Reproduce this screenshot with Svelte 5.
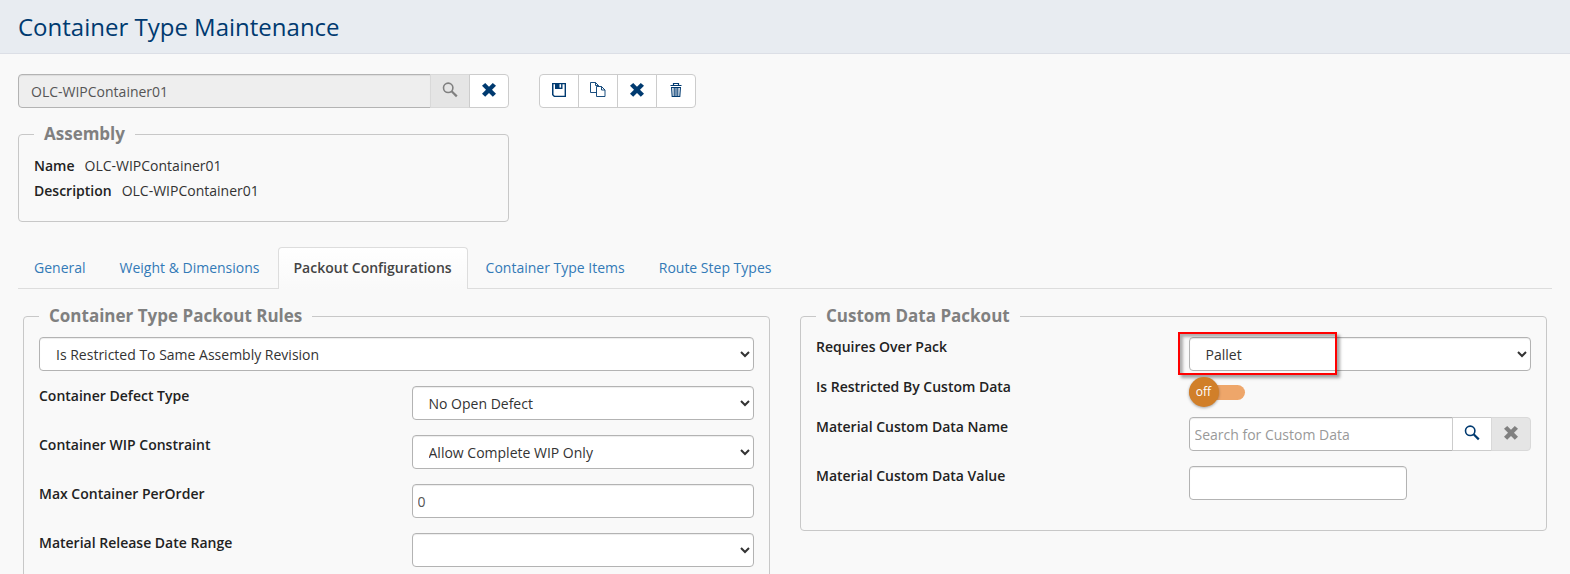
<script>
  let containerType = $state('OLC-WIPContainer01');
  let customDataName = $state('');
  let customDataValue = $state('');
  let maxPerOrder = $state('0');
  let restrictedByCustomData = $state(false);
  let activeTab = $state('Packout Configurations');

  const tabs = [
    'General',
    'Weight & Dimensions',
    'Packout Configurations',
    'Container Type Items',
    'Route Step Types'
  ];
</script>

{#snippet cross()}
  <svg class="icon" viewBox="0 0 16 16" aria-hidden="true">
    <path d="M4.200 1 8 4.800 11.800 1 15 3.800 11 7.800l4 4-3.200 2.900L8 10.900l-3.800 3.800L1 11.800l4-4-4-4z" fill="currentColor" />
  </svg>
{/snippet}

{#snippet magnifier()}
  <svg class="icon" viewBox="0 0 16 16" aria-hidden="true">
    <circle cx="6.200" cy="5.800" r="4.700" fill="none" stroke="currentColor" stroke-width="1.600" />
    <path d="m9.600 9.200 5.200 5.200" stroke="currentColor" stroke-width="2.200" fill="none" />
  </svg>
{/snippet}

<header>
  <h1>Container Type Maintenance</h1>
</header>

<main>
  <div class="toolbar">
    <div class="group lookup">
      <input aria-label="Container type" bind:value={containerType} disabled />
      <button type="button" aria-label="Search" disabled>{@render magnifier()}</button>
      <button type="button" aria-label="Clear">{@render cross()}</button>
    </div>
    <div class="group">
      <button type="button" aria-label="Save">
        <svg class="icon" viewBox="0 0 16 16" aria-hidden="true">
          <path d="M1 1h14v14H3L1 13zM2.500 2.200v10.200l1.200 1.300h9.900V2.200z" fill="currentColor" fill-rule="evenodd" />
          <path d="M4 1.500h7.500V7H4z" fill="currentColor" />
          <path d="M8.500 2.200h1.600v3.400H8.500z" fill="#fff" />
        </svg>
      </button>
      <button type="button" aria-label="Copy">
        <svg class="icon" viewBox="0 0 16 16" fill="none" stroke="currentColor" stroke-width="0.900" aria-hidden="true">
          <path d="M6.500 10.500h-6v-10h5l3 3v1M5.500.500v3h3" />
          <path d="M6.500 4.500h5l3.500 3.500v6.500H6.500zM11.500 4.500V8H15" />
        </svg>
      </button>
      <button type="button" aria-label="Cancel">{@render cross()}</button>
      <button type="button" aria-label="Delete">
        <svg class="icon" viewBox="0 0 16 16" fill="none" stroke="currentColor" aria-hidden="true">
          <path d="M5.500 3V1.500h5V3M2.500 3.500h11" stroke-width="1.200" />
          <path d="M3 5.500h10M3.600 6l.6 8.500h7.600l.6-8.500M6.200 6v8M8 6v8M9.800 6v8" stroke-width="1.100" />
        </svg>
      </button>
    </div>
  </div>

  <fieldset class="assembly">
    <legend>Assembly</legend>
    <dl>
      <div><dt>Name</dt><dd>OLC-WIPContainer01</dd></div>
      <div><dt>Description</dt><dd>OLC-WIPContainer01</dd></div>
    </dl>
  </fieldset>

  <nav>
    {#each tabs as tab}
      <a
        href="#tab"
        class:active={tab === activeTab}
        onclick={(e) => {
          e.preventDefault();
          activeTab = tab;
        }}>{tab}</a>
    {/each}
  </nav>

  <div class="panels">
    <fieldset>
      <legend>Container Type Packout Rules</legend>
      <div class="rows">
        <select aria-label="Restriction">
          <option>Is Restricted To Same Assembly Revision</option>
        </select>
        <div class="row">
          <label for="defect">Container Defect Type</label>
          <select id="defect"><option>No Open Defect</option></select>
        </div>
        <div class="row">
          <label for="wip">Container WIP Constraint</label>
          <select id="wip"><option>Allow Complete WIP Only</option></select>
        </div>
        <div class="row">
          <label for="max">Max Container PerOrder</label>
          <input id="max" bind:value={maxPerOrder} />
        </div>
        <div class="row">
          <label for="range">Material Release Date Range</label>
          <select id="range"><option></option></select>
        </div>
      </div>
    </fieldset>

    <fieldset>
      <legend>Custom Data Packout</legend>
      <div class="row tight">
        <label for="overpack">Requires Over Pack</label>
        <div class="marked">
          <select id="overpack"><option>Pallet</option></select>
          <span class="marker"></span>
        </div>
      </div>
      <div class="row tight">
        <label for="restricted">Is Restricted By Custom Data</label>
        <div class="switch">
          <input type="checkbox" id="restricted" bind:checked={restrictedByCustomData} />
          <span class="track"></span>
          <span class="knob" class:on={restrictedByCustomData}>{restrictedByCustomData ? 'on' : 'off'}</span>
        </div>
      </div>
      <div class="rows">
        <div class="row">
          <label for="dataname">Material Custom Data Name</label>
          <div class="group">
            <input id="dataname" placeholder="Search for Custom Data" bind:value={customDataName} />
            <button type="button" aria-label="Search custom data">{@render magnifier()}</button>
            <button type="button" aria-label="Clear custom data" disabled>{@render cross()}</button>
          </div>
        </div>
        <div class="row">
          <label for="datavalue">Material Custom Data Value</label>
          <input id="datavalue" class="short" bind:value={customDataValue} />
        </div>
      </div>
    </fieldset>
  </div>
</main>

<style>
  :global(body) {
    background: #f9f9f9;
    color: #222;
    font: 14px/20px 'Open Sans', sans-serif;
    overflow: hidden;
  }
  :global(*) {
    box-sizing: border-box;
  }
  header {
    padding: 8px 18px;
    background: #e8ecf1;
    border-bottom: 1px solid #dcdfe6;
  }
  h1 {
    margin: 0;
    color: #003a70;
    font-size: 24px;
    font-weight: 400;
    line-height: 37px;
  }
  main {
    padding: 20px 18px 0;
  }
  .toolbar {
    display: flex;
    gap: 30px;
  }
  .lookup,
  .assembly {
    width: 32%;
  }
  .group {
    display: flex;
  }
  input,
  select {
    width: 100%;
    min-width: 0;
    height: 34px;
    border: 1px solid #b3b3b3;
    border-radius: 4px;
    background-color: #fff;
    color: #555;
    font: inherit;
    box-shadow: inset 0 1px 1px rgba(0, 0, 0, 0.075);
  }
  input {
    padding: 1px 5px 0;
  }
  select {
    padding: 1px 0 0 12px;
    color: #333;
  }
  input::placeholder {
    color: #999;
  }
  .group input {
    flex: 1;
    border-radius: 4px 0 0 4px;
  }
  .lookup input {
    padding-left: 12px;
    background-color: #eee;
    color: #555;
  }
  button {
    display: flex;
    flex: none;
    justify-content: center;
    width: 40px;
    height: 34px;
    padding: 7px 0 0;
    border: 1px solid #ccc;
    background: #fff;
    color: #003a70;
  }
  button:not(:first-child) {
    margin-left: -1px;
  }
  button:first-child {
    border-radius: 4px 0 0 4px;
  }
  button:last-child {
    border-radius: 0 4px 4px 0;
  }
  button:disabled {
    background: #e5e5e5;
    border-color: #d9d9d9;
    color: #808080;
  }
  .icon {
    width: 16px;
    height: 16px;
  }
  fieldset {
    min-width: 0;
    margin: 0;
    padding: 0 15px 30px;
    border: 1px solid #c8c8c8;
    border-radius: 4px;
  }
  legend {
    padding: 0 10px;
    color: #808080;
    font-size: 17px;
    font-weight: 700;
    line-height: 24px;
  }
  .assembly {
    margin-top: 14px;
    padding-bottom: 15px;
  }
  dl {
    margin: 10px 0 0;
  }
  dl div {
    display: flex;
    gap: 10px;
    padding-bottom: 5px;
  }
  dt,
  label {
    font-weight: 600;
  }
  dd {
    margin: 0;
    color: #333;
  }
  nav {
    display: flex;
    gap: 2px;
    margin-top: 25px;
    border-bottom: 1px solid #ddd;
  }
  nav a {
    margin-bottom: -1px;
    padding: 10px 15px 11px;
    border: 1px solid transparent;
    border-bottom: 0;
    border-radius: 4px 4px 0 0;
    color: #337ab7;
    text-decoration: none;
  }
  nav a.active {
    border-color: #ddd;
    background: linear-gradient(#fff, #f9f9f9);
    color: #444;
    font-weight: 600;
  }
  .panels {
    display: grid;
    grid-template-columns: 1fr 1fr;
    gap: 30px;
    align-items: start;
    padding: 15px 5px 0;
  }
  .panels > fieldset {
    padding-top: 9px;
  }
  .rows {
    display: grid;
    gap: 15px;
  }
  .row {
    display: grid;
    grid-template-columns: 1fr 1fr;
    gap: 30px;
    align-items: start;
  }
  .tight {
    height: 40px;
  }
  .short {
    width: 218px;
  }
  .marked,
  .switch {
    position: relative;
  }
  .marker {
    position: absolute;
    top: -5px;
    left: -11px;
    width: 159px;
    height: 43px;
    border: 2px solid #f00;
    box-shadow: 3px 3px 3px rgba(0, 0, 0, 0.35), inset 3px 3px 3px rgba(0, 0, 0, 0.3);
    pointer-events: none;
  }
  .switch {
    display: flex;
    align-items: center;
    width: 56px;
    height: 30px;
  }
  .switch input {
    position: absolute;
    inset: 0;
    height: 30px;
    margin: 0;
    opacity: 0;
  }
  .track {
    flex: 1;
    height: 15px;
    border-radius: 8px;
    background: #eea66a;
  }
  .knob {
    position: absolute;
    left: 0;
    width: 30px;
    height: 30px;
    border-radius: 50%;
    background: #d17f29;
    box-shadow: 0 1px 3px rgba(0, 0, 0, 0.35);
    color: #fff;
    font-size: 12px;
    line-height: 29px;
    text-align: center;
    pointer-events: none;
  }
  .knob.on {
    left: 26px;
  }
</style>
